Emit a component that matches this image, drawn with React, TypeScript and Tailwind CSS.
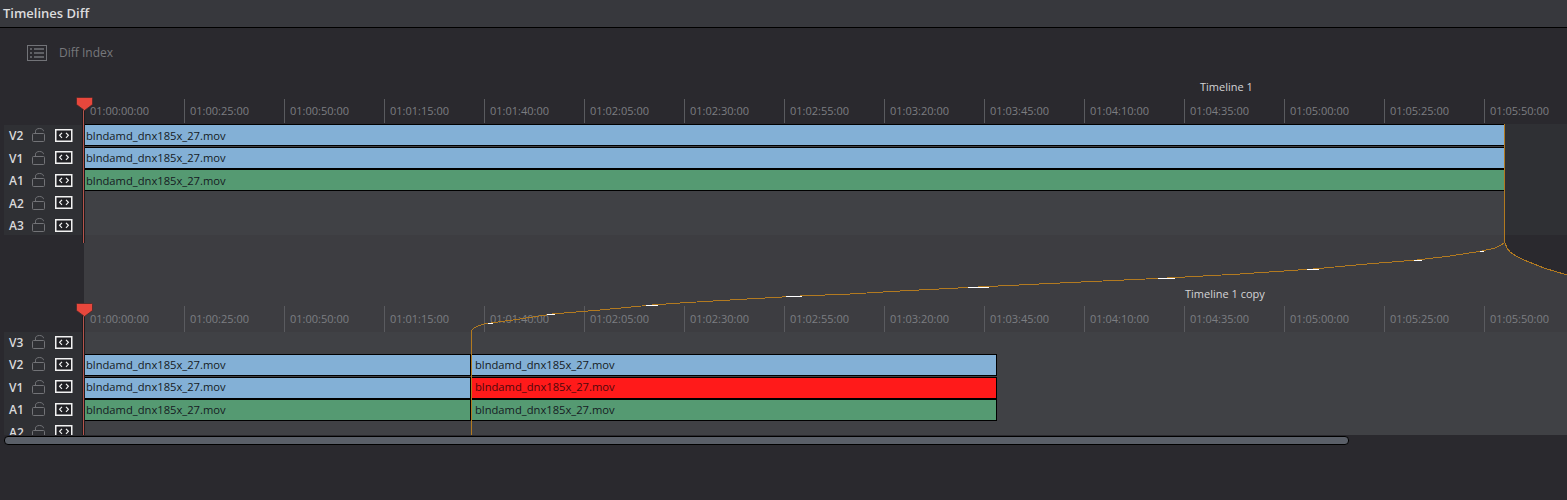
const rulerTimes = [
  '01:00:00:00', '01:00:25:00', '01:00:50:00', '01:01:15:00', '01:01:40:00',
  '01:02:05:00', '01:02:30:00', '01:02:55:00', '01:03:20:00', '01:03:45:00',
  '01:04:10:00', '01:04:35:00', '01:05:00:00', '01:05:25:00', '01:05:50:00',
];

const clipName = 'blndamd_dnx185x_27.mov';

function Ruler({ className }: { className: string }) {
  return (
    <div className={`flex overflow-hidden ${className}`}>
      {rulerTimes.map((time, i) => (
        <div key={time} className="flex h-full w-[100px] shrink-0 items-end">
          <div className={`flex h-full w-full items-center pl-[5px] text-[11px] text-[#7c7d81] ${i === 0 ? 'border-l border-transparent' : 'border-l border-[#5a5b5f]'}`}>
            {time}
          </div>
        </div>
      ))}
    </div>
  );
}

function LockIcon() {
  return (
    <svg className="-mt-[2px]" width="14" height="14" viewBox="0 0 14 14" fill="none" stroke="#727377" strokeWidth="1">
      <rect x="0.5" y="5.5" width="12" height="8" rx="1" />
      <path d="M3.5 5.5V3.200C3.500 1.600 5 0.500 7.500 0.500C10 0.500 11.500 1.600 11.500 3.200" />
    </svg>
  );
}

function AutoSelectIcon() {
  return (
    <svg className="-mt-[2px] block" width="18" height="13" viewBox="0 0 18 13" fill="none">
      <rect x="0.75" y="0.75" width="16" height="11.5" fill="#202024" stroke="#f2f2f2" strokeWidth="1.5" />
      <path d="M7 3.800L4.600 6.300L7 8.800M11 3.800L13.400 6.300L11 8.800" stroke="#f2f2f2" strokeWidth="1.2" />
    </svg>
  );
}

function TrackHeader({ label, height }: { label: string; height: string }) {
  return (
    <div className={`flex shrink-0 items-center ${height}`}>
      <span className="w-[28px] pl-[5px] text-[12px] font-semibold text-[#d9d9db]">{label}</span>
      <LockIcon />
      <span className="ml-[9px]"><AutoSelectIcon /></span>
    </div>
  );
}

function Clip({ className, textColor = 'text-[#151b23]' }: { className: string; textColor?: string }) {
  return (
    <div className={`flex h-[22px] shrink-0 items-center truncate border-y border-r border-black text-[11.200px] ${className} ${textColor}`}>
      {clipName}
    </div>
  );
}

const curve =
  '471,331 474,328 478,326 484,324 491,323 520,319 552,314 600,310 652,305 680,303 730,300 800,296 850,294 900,291 978,287 1060,283 1167,278 1240,274 1313,269 1367,264 1417,260 1450,256 1482,251 1495,248 1501,245 1504,243';
const curveRight = '1505,243 1507,248 1510,252 1516,256 1524,260 1544,268 1567,275';

const marks = [
  [488, 323, 5], [547, 314, 8], [646, 305, 12], [786, 296, 16], [968, 287, 21],
  [1158, 278, 17], [1307, 269, 12], [1414, 260, 8], [1480, 251, 4],
];

function DiffOverlay() {
  return (
    <svg className="pointer-events-none absolute left-0 top-0" width="1567" height="500" viewBox="0 0 1567 500">
      {/* dark corner above the right hand curve */}
      <polygon points={`1505,235 ${curveRight} 1567,235`} fill="#2a292e" />
      <g fill="none" stroke="#b27a20" strokeWidth="1" shapeRendering="crispEdges">
        <polyline points={curve} />
        <polyline points={curveRight} />
        <line x1="1504.5" y1="124" x2="1504.5" y2="243" />
        <line x1="471.5" y1="331" x2="471.5" y2="435" />
      </g>
      {marks.map(([x, y, w]) => (
        <rect key={x} x={x} y={y} width={w} height="1" fill="#ffffff" />
      ))}
      {/* playheads */}
      <rect x="82" y="108" width="3" height="135" fill="#1c1c1f" />
      <rect x="83" y="108" width="1" height="135" fill="#b5544c" />
      <rect x="82" y="314" width="3" height="121" fill="#1c1c1f" />
      <rect x="83" y="314" width="1" height="121" fill="#b5544c" />
      <path d="M77.500 97.500H91.500C92.100 97.500 92.500 97.900 92.500 98.500V104.500L84.500 110.500L76.500 104.500V98.500C76.500 97.900 76.900 97.500 77.500 97.500Z" fill="#e8473c" stroke="#4a2a28" strokeWidth="0.8" />
      <path d="M77.500 303.500H91.500C92.100 303.500 92.500 303.900 92.500 304.500V310.500L84.500 316.500L76.500 310.500V304.500C76.500 303.900 76.900 303.500 77.500 303.500Z" fill="#e8473c" stroke="#4a2a28" strokeWidth="0.8" />
    </svg>
  );
}

export default function App() {
  return (
    <div className="relative h-[500px] w-[1567px] overflow-hidden bg-[#2a292e] font-['Open_Sans',sans-serif]">
      <div className="flex h-[28px] items-center border-b border-black bg-[#37383d] pl-[3px] text-[13px] font-semibold text-[#dcdcde]">
        Timelines Diff
      </div>

      <div className="flex h-[48px] items-center pl-[27px] pt-[2px]">
        <svg width="20" height="16" viewBox="0 0 20 16" fill="none" stroke="#727378">
          <rect x="0.5" y="0.5" width="19" height="15" />
          <path d="M3 4H5M3 8H5M3 12H5M7 4H17M7 8H17M7 12H17" strokeWidth="1.500" />
        </svg>
        <span className="ml-[12px] text-[12px] text-[#77787c]">Diff Index</span>
      </div>

      <div className="flex h-[22px] items-center pl-[1200px] text-[11px] text-[#d4d4d6]">Timeline 1</div>
      <Ruler className="ml-[84px] h-[26px] py-px" />

      <div className="flex h-[111px]">
        <div className="ml-[4px] mt-px w-[78px] overflow-hidden bg-[#2f3034]">
          {['V2', 'V1', 'A1', 'A2', 'A3'].map((t) => (
            <TrackHeader key={t} label={t} height="h-[22.500px]" />
          ))}
        </div>
        <div className="ml-[2px] w-[1421px] bg-[#404145]">
          <div className="h-[22.500px]"><Clip className="w-full pl-[2px] pt-[2px] bg-[#83b0d6]" /></div>
          <div className="h-[22.500px]"><Clip className="w-full pl-[2px] pt-[2px] bg-[#83b0d6]" /></div>
          <div className="h-[22.500px]"><Clip className="w-full pl-[2px] pt-[2px] bg-[#559a72]" /></div>
        </div>
        <div className="flex-1 bg-[#2f3034]" />
      </div>

      <div className="ml-[84px] flex h-[70px] items-end bg-[#3d3d41] pb-[3px] pl-[1101px] text-[11px] text-[#d4d4d6]">
        Timeline 1 copy
      </div>
      <Ruler className="ml-[84px] h-[27px] bg-[#3d3d41] pt-px" />

      <div className="flex h-[103px]">
        <div className="ml-[4px] w-[78px] overflow-hidden bg-[#2f3034]">
          <TrackHeader label="V3" height="h-[22px]" />
          {['V2', 'V1', 'A1', 'A2'].map((t) => (
            <TrackHeader key={t} label={t} height="h-[22.500px]" />
          ))}
        </div>
        <div className="ml-[2px] flex-1 bg-[#404145]">
          <div className="h-[22px]" />
          <div className="flex h-[22.500px]">
            <Clip className="w-[387px] pl-[2px] bg-[#83b0d6]" />
            <Clip className="ml-px w-[525px] pl-[3px] bg-[#83b0d6]" />
          </div>
          <div className="flex h-[22.500px]">
            <Clip className="w-[387px] pl-[2px] bg-[#83b0d6]" />
            <Clip className="ml-px w-[525px] pl-[3px] bg-[#ff1a1a]" textColor="text-[#4f080c]" />
          </div>
          <div className="flex h-[22.500px]">
            <Clip className="w-[387px] pl-[2px] bg-[#559a72]" />
            <Clip className="ml-px w-[525px] pl-[3px] bg-[#559a72]" />
          </div>
        </div>
      </div>

      <div className="ml-[4px] mt-px h-[9px] w-[1345px] rounded-[4px] border border-black bg-[#5a5f68]" />

      <DiffOverlay />
    </div>
  );
}
